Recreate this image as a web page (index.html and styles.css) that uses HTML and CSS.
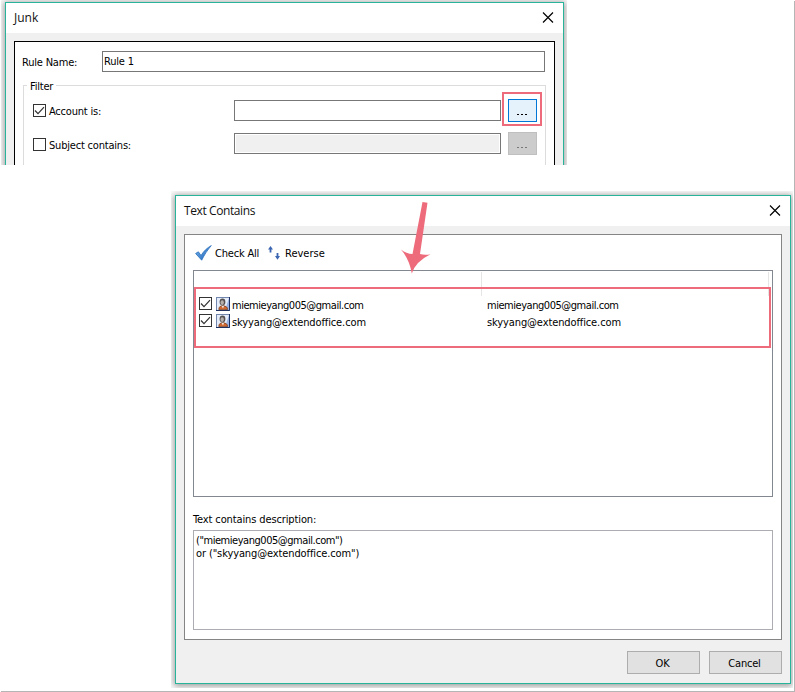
FILE: index.html
```html
<!DOCTYPE html>
<html lang="en">
<head>
<meta charset="utf-8">
<title>Junk</title>
<link rel="stylesheet" href="styles.css">
</head>
<body>
<svg class="defs" width="0" height="0">
  <defs>
    <symbol id="close" viewBox="0 0 11 11"><path d="M.5.5l10 10M10.5.5l-10 10" stroke="#000" stroke-width="1.15" fill="none"/></symbol>
    <symbol id="tick" viewBox="0 0 13 13"><path d="M2 6.5l3 3.2L11 3.2" stroke="#333" stroke-width="1.2" fill="none"/></symbol>
    <symbol id="user" viewBox="0 0 14 14">
      <rect x=".5" y=".5" width="13" height="13" fill="#e6edfa" stroke="#7387ae"/>
      <path d="M13 1v12H9z" fill="#9ab3e2"/>
      <path d="M13.5 0v13.5H0" fill="none" stroke="#1d3263"/>
      <path d="M2.8 12.6c0-2.800 1.500-3.800 4-3.800s4.800 1 4.800 3.800z" fill="#d0682f" stroke="#713617" stroke-width=".7"/>
      <ellipse cx="6.500" cy="5" rx="2.900" ry="3.400" fill="#55504f"/>
      <ellipse cx="6.200" cy="5.600" rx="1.700" ry="2.300" fill="#b5aeab"/>
      <path d="M5.500 9l1.500 2.500 1-2.500z" fill="#f3e6de"/>
    </symbol>
  </defs>
</svg>
<main class="canvas">
  <div class="frame junk-frame">
    <section class="window junk">
      <header class="titlebar"><h1>Junk</h1><svg class="close"><use href="#close"/></svg></header>
      <div class="junk-panel">
        <div class="name-row"><label class="name-label">Rule Name:</label><div class="field name-field"><span class="rule">Rule 1</span></div></div>
        <fieldset class="filter">
          <legend>Filter</legend>
          <div class="filter-row">
            <span class="box"><svg><use href="#tick"/></svg></span><label class="account">Account is:</label>
            <div class="field"></div><button class="more active"><i></i><i></i><i></i></button>
          </div>
          <div class="filter-row second">
            <span class="box"></span><label class="subject">Subject contains:</label>
            <div class="field disabled"></div><button class="more off"><i></i><i></i><i></i></button>
          </div>
        </fieldset>
      </div>
    </section>
  </div>
  <div class="frame text-frame">
    <section class="window contains">
      <header class="titlebar"><h1 class="contains-title">Text Contains</h1><svg class="close"><use href="#close"/></svg></header>
      <div class="panel">
        <div class="toolbar">
          <svg class="check-icon" viewBox="0 0 17 16"><defs><linearGradient id="blue" x2="1" y2="1"><stop stop-color="#7db7ef"/><stop offset="1" stop-color="#175fb4"/></linearGradient></defs><path d="M.6 8.500L3.400 6.800 6 10.500C9 5.800 12 3 16.300.6 12.500 5 9.500 9.500 6.700 15.200z" fill="url(#blue)" stroke="#2a70bd" stroke-width=".8" stroke-linejoin="round"/></svg>
          <span class="check-all">Check All</span>
          <svg class="reverse-icon" viewBox="0 0 13 14"><path d="M2.500 0L5 3.500H3.400V6.500H1.600V3.500H0zM8.600 7h1.800v3H12l-2.500 3.800L7 10h1.600z" fill="#3c66b2"/></svg>
          <span class="reverse">Reverse</span>
        </div>
        <div class="list">
          <div class="list-head"><span></span><span></span></div>
          <div class="list-row"><span class="box"><svg><use href="#tick"/></svg></span><svg class="user"><use href="#user"/></svg><span class="mail miemie first">miemieyang005@gmail.com</span><span class="mail miemie">miemieyang005@gmail.com</span></div>
          <div class="list-row"><span class="box"><svg><use href="#tick"/></svg></span><svg class="user"><use href="#user"/></svg><span class="mail sky first">skyyang@extendoffice.com</span><span class="mail sky">skyyang@extendoffice.com</span></div>
        </div>
        <div class="desc-label"><span>Text contains description:</span></div>
        <div class="desc"><div><span class="miemie">("miemieyang005@gmail.com")</span></div><div><span class="sky">or ("skyyang@extendoffice.com")</span></div></div>
      </div>
      <footer class="actions"><button class="ok">OK</button><button class="cancel">Cancel</button></footer>
    </section>
  </div>
  <div class="mark mark-button"></div>
  <div class="mark mark-rows"></div>
  <svg class="arrow" viewBox="0 0 32 74"><path d="M22.500 1l5 .8L20 53q5 1.300 10.500.2Q15.500 60.500 11.800 72.500 9.500 58.500 1 48.500q5.500 4.300 11.500 4.500z" fill="#ed6b7b"/></svg>
</main>
</body>
</html>
```
FILE: styles.css
```css
* { box-sizing: border-box; }
body { margin: 0; background: #fff; color: #000; font: 11px/13px "DejaVu Sans Condensed", "DejaVu Sans", sans-serif; font-stretch: condensed; letter-spacing: -.2px; }
.defs { position: absolute; }
svg { display: block; flex: none; }
.canvas { position: relative; width: 795px; height: 692px; overflow: hidden; }
.canvas::before { content: ""; position: absolute; left: 1px; top: 1px; width: 794px; height: 691px; border: solid #cfcfcf; border-width: 0 1px 1px 0; box-shadow: inset -1px -1px #b5b5b5; }
.frame { position: absolute; overflow: hidden; background: #fafafa; }
.junk-frame { left: 1px; top: 0; width: 566px; height: 165px; padding: 2px 3px 0 4px; }
.text-frame { left: 171px; top: 191px; width: 622px; height: 497px; padding: 4px 2px 4px 4px; }
.window { border: 1px solid #28b49b; background: #f0f0f0; box-shadow: 0 1px 6px 1px rgba(0,0,0,.38); }
.junk { height: 200px; width: 559px; }
.contains { width: 616px; height: 489px; }
.titlebar { height: 30px; background: #fff; display: flex; align-items: center; justify-content: space-between; padding: 0 9px 0 8px; }
h1 { margin: 0 0 1px; font: 12px/16px "Open Sans", sans-serif; color: #111; letter-spacing: 0; }
.contains-title { letter-spacing: -.4px; }
.close { width: 12px; height: 11px; margin-bottom: 1px; }
.junk-panel { margin: 8px 8px 0; height: 180px; border: 1px solid #000; background: #fff; padding: 9px 9px 0 7px; }
.name-row { display: flex; height: 21px; justify-content: space-between; align-items: center; }
.name-label { margin-top: 2px; }
.name-field { width: 443px; }
.field { height: 21px; border: 1px solid #777; background: #fff; padding: 3px 1px; }
.filter { position: relative; margin: 13px 0 0 1px; border: 1px solid #dcdcdc; height: 120px; padding: 14px 8px 0 9px; min-width: 0; width: 523px; }
legend { position: absolute; top: -6px; left: 3px; padding: 0 3px; background: #fff; }
.filter-row { display: flex; height: 23px; align-items: center; margin-top: -1px; }
.filter-row + .filter-row { margin-top: 10px; }
.filter-row label { width: 186px; margin: 2px 0 0 2px; padding-left: 1px; }
.second .box { margin-top: 2px; }
.filter-row.second label { margin-top: 4px; }
.filter-row .field { width: 267px; margin: 0 7px 0 0; }
.field.disabled { background: #f0f0f0; box-shadow: inset 0 0 0 1px #fff; }
.box { width: 13px; height: 13px; border: 1px solid #333; background: #fff; flex: none; }
.box svg { width: 13px; height: 13px; margin: -1px; }
button { font: inherit; letter-spacing: inherit; color: #000; padding: 2px 2px 0 0; border: 1px solid #adadad; background: #e1e1e1; width: 73px; height: 23px; }
.more { width: 29px; display: flex; gap: 2px; align-items: flex-end; justify-content: center; padding: 0 2px 6px 0; }
.more i { width: 2px; height: 1px; background: #000; }
.active { border-color: #0078d7; background: #e5f1fb; }
.off { border-color: #bfbfbf; background: #ccc; }
.off i { background: #777; }
.panel { margin: 8px 8px 0; height: 406px; border: 1px solid #858585; background: #fff; padding: 0 8px; }
.toolbar { height: 35px; display: flex; align-items: center; padding: 1px 0 0 2px; }
.check-icon { width: 17px; height: 16px; }
.check-all { margin-left: 3px; width: 53px; white-space: nowrap; }
.reverse-icon { width: 13px; height: 14px; }
.reverse { margin-left: 4px; letter-spacing: 0; }
.list { height: 227px; border: 1px solid #828790; padding: 1px 3px 0 5px; }
.list-head { display: flex; height: 24px; justify-content: flex-end; }
.list-head span { border-left: 1px solid #e5e5e5; width: 287px; }
.list-head span + span { width: 1px; }
.list-row { display: flex; height: 17px; align-items: center; }
.list-row .box { margin-bottom: 2px; }
.user { width: 14px; height: 14px; margin: 0 0 1px 4px; }
.first { width: 255px; margin-left: 2px; }
.mail { white-space: nowrap; margin-top: 1px; }
.miemie { letter-spacing: -.46px; }
.sky { letter-spacing: -.11px; }
.desc-label { height: 33px; padding-top: 16px; letter-spacing: -.12px; }
.desc { height: 100px; border: 1px solid #abadb3; padding: 3px 2px; }
.actions { display: flex; justify-content: flex-end; gap: 9px; padding: 11px 8px 0; }
.mark { position: absolute; border: 2px solid #ed6b7b; }
.mark-button { left: 502px; top: 92px; width: 40px; height: 34px; }
.mark-rows { left: 194px; top: 287px; width: 577px; height: 61px; }
.arrow { position: absolute; left: 400px; top: 201px; width: 32px; height: 74px; }
```
